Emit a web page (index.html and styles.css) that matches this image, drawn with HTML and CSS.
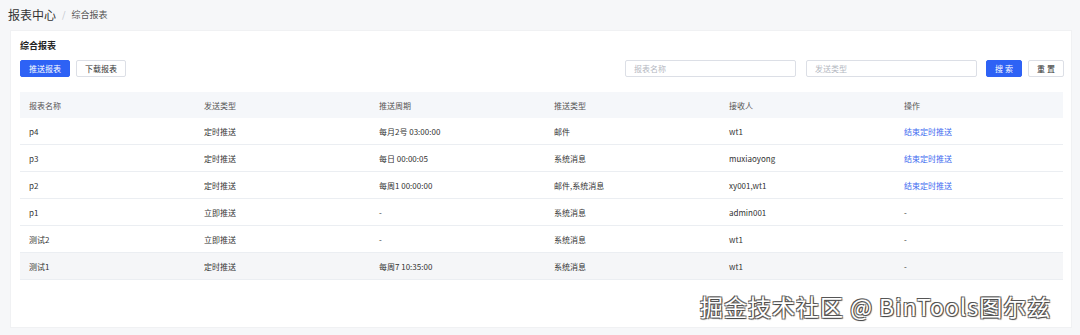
FILE: index.html
```html
<!DOCTYPE html>
<html lang="zh-CN">
<head>
    <meta charset="UTF-8">
    <title>综合报表</title>
    <link rel="stylesheet" href="styles.css">
</head>
<body>
    <div class="breadcrumb">
        <span class="crumb-root">报表中心</span>
        <span class="crumb-sep">/</span>
        <span class="crumb-current">综合报表</span>
    </div>

    <div class="card">
        <div class="card-title">综合报表</div>

        <div class="toolbar">
            <div class="toolbar-left">
                <button class="btn btn-primary">推送报表</button>
                <button class="btn">下载报表</button>
            </div>
            <div class="toolbar-right">
                <input class="field" type="text" placeholder="报表名称">
                <input class="field" type="text" placeholder="发送类型">
                <button class="btn btn-primary btn-narrow">搜 索</button>
                <button class="btn btn-narrow">重 置</button>
            </div>
        </div>

        <table class="report-table">
            <colgroup>
                <col class="col">
                <col class="col">
                <col class="col">
                <col class="col">
                <col class="col">
                <col>
            </colgroup>
            <thead>
                <tr>
                    <th>报表名称</th>
                    <th>发送类型</th>
                    <th>推送周期</th>
                    <th>推送类型</th>
                    <th>接收人</th>
                    <th>操作</th>
                </tr>
            </thead>
            <tbody>
                <tr>
                    <td>p4</td>
                    <td>定时推送</td>
                    <td>每月2号 03:00:00</td>
                    <td>邮件</td>
                    <td>wt1</td>
                    <td><a href="#">结束定时推送</a></td>
                </tr>
                <tr>
                    <td>p3</td>
                    <td>定时推送</td>
                    <td>每日 00:00:05</td>
                    <td>系统消息</td>
                    <td>muxiaoyong</td>
                    <td><a href="#">结束定时推送</a></td>
                </tr>
                <tr>
                    <td>p2</td>
                    <td>定时推送</td>
                    <td>每周1 00:00:00</td>
                    <td>邮件,系统消息</td>
                    <td>xy001,wt1</td>
                    <td><a href="#">结束定时推送</a></td>
                </tr>
                <tr>
                    <td>p1</td>
                    <td>立即推送</td>
                    <td>-</td>
                    <td>系统消息</td>
                    <td>admin001</td>
                    <td>-</td>
                </tr>
                <tr>
                    <td>测试2</td>
                    <td>立即推送</td>
                    <td>-</td>
                    <td>系统消息</td>
                    <td>wt1</td>
                    <td>-</td>
                </tr>
                <tr class="hover">
                    <td>测试1</td>
                    <td>定时推送</td>
                    <td>每周7 10:35:00</td>
                    <td>系统消息</td>
                    <td>wt1</td>
                    <td>-</td>
                </tr>
            </tbody>
        </table>
    </div>

    <div class="watermark">掘金技术社区 @ BinTools图尔兹</div>
</body>
</html>
```

FILE: styles.css
```css
body {
    margin: 0;
    height: 335px;
    background-color: #f6f7f9;
    font-family: "Noto Sans CJK SC", "Noto Sans", sans-serif;
    color: #333;
    position: relative;
    overflow: hidden;
}

.breadcrumb {
    height: 30px;
    padding-left: 8px;
    display: flex;
    align-items: center;
    gap: 6px;
    box-sizing: border-box;
    padding-bottom: 2px;
}

.crumb-root {
    font-size: 12px;
    color: #333;
}

.crumb-sep {
    font-size: 9px;
    color: #c0c4cc;
}

.crumb-current {
    font-size: 9px;
    color: #555;
}

.card {
    margin: 0 8px 0 10px;
    height: 298px;
    box-sizing: border-box;
    background-color: #fff;
    border: 1px solid #f0f1f3;
    padding: 9px 7px 0 9px;
}

.card-title {
    font-size: 9px;
    font-weight: bold;
    line-height: 12px;
    color: #222;
}

.toolbar {
    margin-top: 8px;
    display: flex;
    justify-content: space-between;
    align-items: center;
}

.toolbar-left,
.toolbar-right {
    display: flex;
    align-items: center;
    gap: 6px;
}

.btn {
    font-family: inherit;
    font-size: 8px;
    height: 17px;
    width: 50px;
    padding: 0;
    border: 1px solid #dcdfe6;
    border-radius: 2px;
    background-color: #fff;
    color: #333;
    cursor: pointer;
}

.btn-primary {
    background-color: #2e62f5;
    border-color: #2e62f5;
    color: #fff;
}

.btn-narrow {
    width: 36px;
}

.field {
    font-family: inherit;
    font-size: 8px;
    width: 171px;
    height: 17px;
    box-sizing: border-box;
    border: 1px solid #dcdfe6;
    border-radius: 2px;
    padding: 0 8px;
    margin-right: 4px;
    outline: none;
}

.field + .field {
    margin-right: 3px;
}

.field::placeholder {
    color: #b4b8bf;
}

.report-table {
    margin-top: 15px;
    width: 1043px;
    border-collapse: collapse;
    table-layout: fixed;
    font-size: 8px;
}

.col {
    width: 175px;
}

.report-table th {
    background-color: #f5f7fa;
    color: #555;
    font-weight: normal;
    height: 26px;
    text-align: left;
    padding: 0 9px;
}

.report-table td {
    height: 26px;
    padding: 0 9px;
    border-bottom: 1px solid #ebeef2;
    color: #333;
}

.report-table tr.hover td {
    background-color: #f5f6f8;
}

.report-table a {
    color: #3d6af0;
    text-decoration: none;
}

.watermark {
    position: absolute;
    left: 700px;
    top: 289px;
    font-size: 23px;
    color: #fff;
    letter-spacing: 1px;
    text-shadow: -1px -1px 0 #555, 1px 1px 1px #444, 1px -1px 0 #777, -1px 1px 0 #777;
    white-space: nowrap;
}
```
